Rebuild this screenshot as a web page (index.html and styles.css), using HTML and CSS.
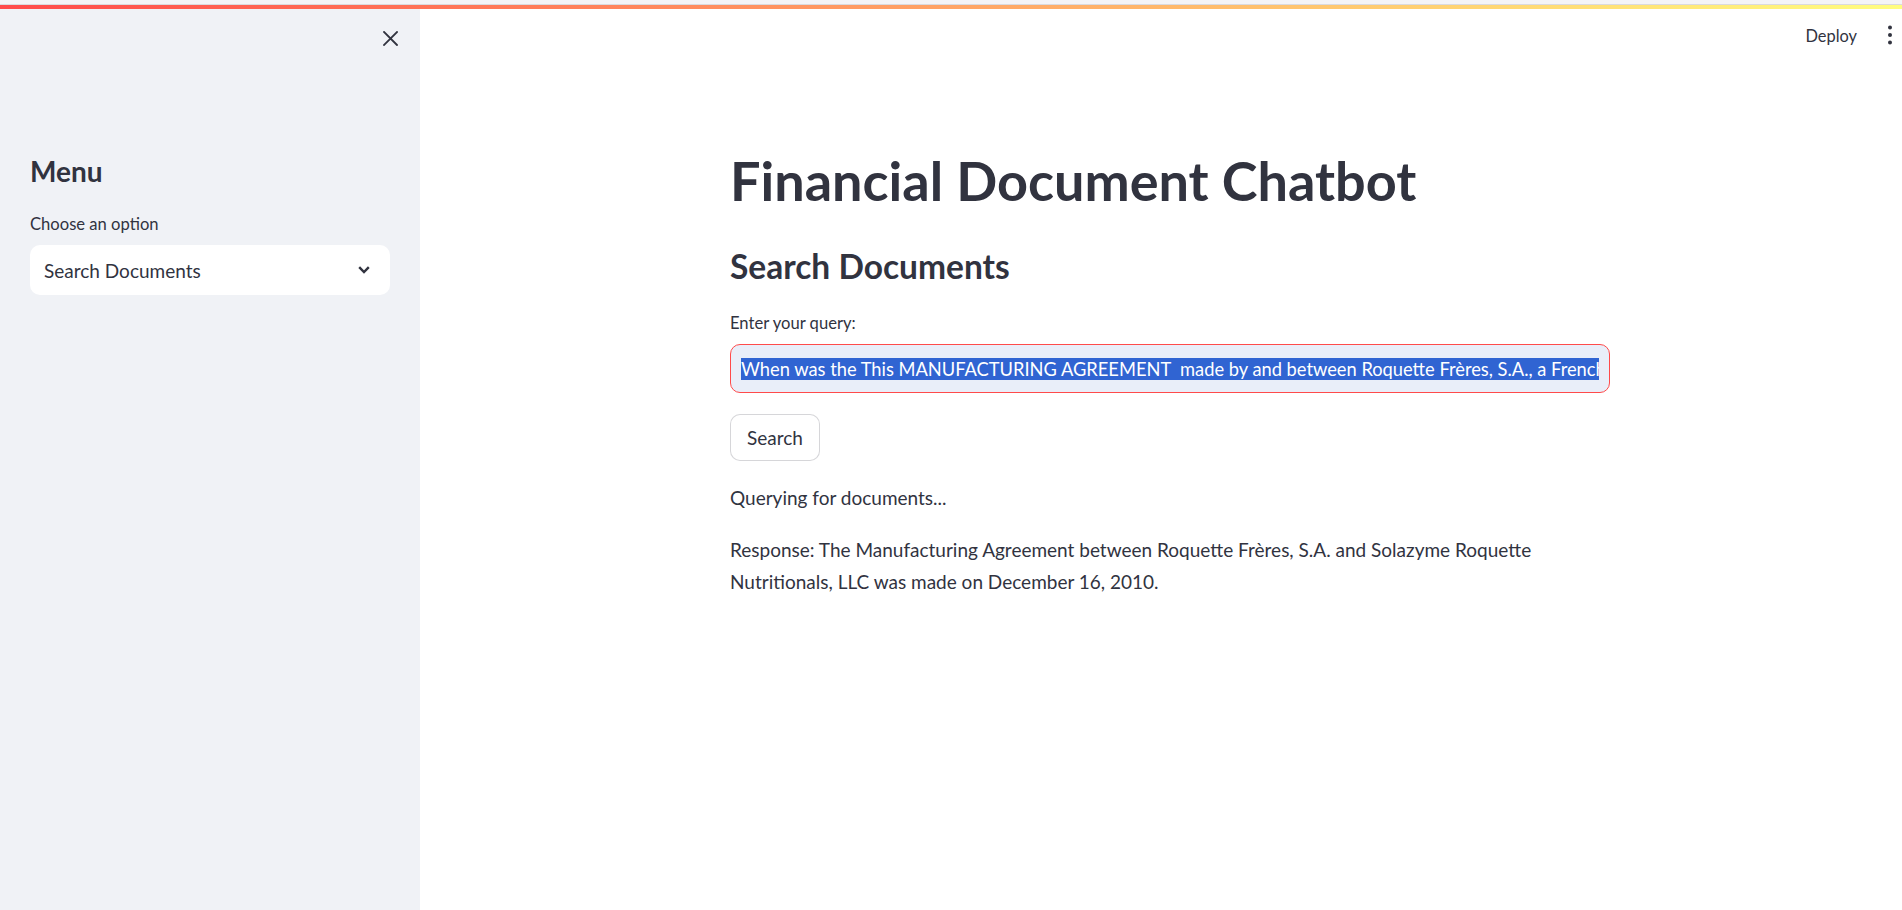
FILE: index.html
```html
<!DOCTYPE html>
<html lang="en">
<head>
<meta charset="utf-8">
<title>Financial Document Chatbot</title>
<link rel="stylesheet" href="styles.css">
</head>
<body>
<div class="topstrip"></div>
<div class="decoration"></div>
<div class="app">
  <aside class="sidebar">
    <div class="sidebar-header">
      <svg class="close-icon" width="15" height="15" viewBox="0 0 15 15"><path d="M1 1 L14 14 M14 1 L1 14" stroke="#31333f" stroke-width="1.8" fill="none" stroke-linecap="square"/></svg>
    </div>
    <div class="sidebar-content">
      <h2 class="sidebar-title">Menu</h2>
      <label class="widget-label">Choose an option</label>
      <div class="select">
        <span>Search Documents</span>
        <svg width="12" height="8" viewBox="0 0 12 8"><polyline points="1.2,1.2 6,6 10.8,1.2" stroke="#31333f" stroke-width="2.4" fill="none"/></svg>
      </div>
    </div>
  </aside>
  <main class="main">
    <header class="main-header">
      <span class="deploy">Deploy</span>
      <svg class="dots" width="4" height="20" viewBox="0 0 4 20"><circle cx="2" cy="2.5" r="2"/><circle cx="2" cy="10" r="2"/><circle cx="2" cy="17.5" r="2"/></svg>
    </header>
    <div class="main-body">
      <div class="block">
        <h1 class="title">Financial Document Chatbot</h1>
        <h3 class="subheader">Search Documents</h3>
        <label class="widget-label">Enter your query:</label>
        <div class="text-input">
          <div class="input-clip"><span class="selected">When was the This MANUFACTURING AGREEMENT  made by and between Roquette Frères, S.A., a French société anonyme and Solazyme Roquette Nutritionals, LLC?</span></div>
        </div>
        <button class="btn">Search</button>
        <p class="text first">Querying for documents...</p>
        <p class="text">Response: The Manufacturing Agreement between Roquette Frères, S.A. and Solazyme Roquette<br>Nutritionals, LLC was made on December 16, 2010.</p>
      </div>
    </div>
  </main>
</div>
</body>
</html>
```

FILE: styles.css
```css
* { box-sizing: border-box; }
html, body { margin: 0; padding: 0; height: 100%; }
body {
  font-family: Lato, "Noto Sans", sans-serif;
  color: #31333f;
  background: #ffffff;
  overflow: hidden;
}
.topstrip {
  height: 5px;
  background: #f4f4f7;
  border-bottom: 1px solid #dadade;
}
.decoration {
  height: 4px;
  background: linear-gradient(90deg, #ff4b4b, #fffd80);
}
.app {
  display: flex;
  height: calc(100vh - 9px);
}
.sidebar {
  flex: none;
  width: 420px;
  background: #f0f2f6;
}
.sidebar-header {
  display: flex;
  justify-content: flex-end;
  padding: 22px 22px 0 0;
}
.close-icon { display: block; }
.sidebar-content {
  padding: 0 30px;
  margin-top: 107px;
}
.sidebar-title {
  margin: 0;
  font-size: 28px;
  line-height: 36px;
  font-weight: 700;
}
.widget-label {
  display: block;
  font-size: 16.6px;
  line-height: 28px;
  margin-bottom: 7px;
}
.sidebar-title + .widget-label { margin-top: 21px; }
.select {
  height: 50px;
  background: #ffffff;
  border-radius: 10px;
  padding: 0 20px 0 14px;
  display: flex;
  align-items: center;
  justify-content: space-between;
  font-size: 19px;
}
.main {
  flex: 1;
  display: flex;
  flex-direction: column;
}
.main-header {
  height: 60px;
  display: flex;
  justify-content: flex-end;
  align-items: flex-start;
  padding: 13px 10px 0 0;
}
.deploy {
  font-size: 16.4px;
  line-height: 28px;
  margin-right: 31px;
}
.dots { margin-top: 3px; fill: #31333f; }
.main-body {
  display: flex;
  justify-content: center;
  padding-left: 18px;
}
.block {
  width: 880px;
  padding-top: 79px;
}
.title {
  margin: 0;
  font-size: 54px;
  line-height: 66px;
  font-weight: 700;
}
.subheader {
  margin: 31px 0 0;
  font-size: 33.5px;
  line-height: 42px;
  font-weight: 700;
}
.subheader + .widget-label { margin-top: 22px; }
.text-input {
  height: 49px;
  border: 1px solid #ff4b4b;
  border-radius: 10px;
  background: #e9eef9;
  padding: 0 10px;
  display: flex;
  align-items: center;
}
.input-clip {
  width: 100%;
  overflow: hidden;
  white-space: pre;
  font-size: 18.3px;
  line-height: 28px;
}
.selected {
  background: #3064d2;
  color: #ffffff;
}
.btn {
  display: block;
  margin-top: 21px;
  height: 47px;
  padding: 0 16px;
  background: #ffffff;
  border: 1px solid rgba(49, 51, 63, 0.2);
  border-radius: 10px;
  font-family: inherit;
  font-size: 19px;
  color: #31333f;
}
.text {
  margin: 20px 0 0;
  font-size: 19px;
  line-height: 32px;
}
.text.first { margin-top: 21px; }
```
